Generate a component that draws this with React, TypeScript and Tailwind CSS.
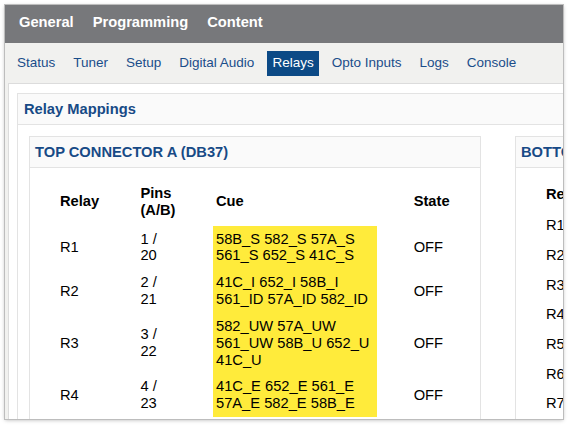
import React from 'react';

const tabs = ['Status', 'Tuner', 'Setup', 'Digital Audio', 'Relays', 'Opto Inputs', 'Logs', 'Console'];

const topRelays = [
  { id: 'R1', pins: ['1 /', '20'], cue: ['58B_S 582_S 57A_S', '561_S 652_S 41C_S'], state: 'OFF' },
  { id: 'R2', pins: ['2 /', '21'], cue: ['41C_I 652_I 58B_I', '561_ID 57A_ID 582_ID'], state: 'OFF' },
  { id: 'R3', pins: ['3 /', '22'], cue: ['582_UW 57A_UW', '561_UW 58B_U 652_U', '41C_U'], state: 'OFF' },
  { id: 'R4', pins: ['4 /', '23'], cue: ['41C_E 652_E 561_E', '57A_E 582_E 58B_E'], state: 'OFF' },
];

const bottomRelays = ['R1', 'R2', 'R3', 'R4', 'R5', 'R6', 'R7'];

const Lines: React.FC<{ lines: string[] }> = ({ lines }) => (
  <>
    {lines.map((l, i) => (
      <span key={i} className="block whitespace-nowrap">{l}</span>
    ))}
  </>
);

export default function App() {
  return (
    <div className="w-[568px] h-[425px] bg-white pt-[5px] pl-[5px] font-['Liberation_Sans',Arial,sans-serif] text-black">
      <div className="w-[558px] h-[414px] overflow-hidden bg-[#f1f1ef] flex flex-col shadow-[0_0_0_1px_#bdbdbd,0_1px_4px_rgba(0,0,0,0.3)]">
        {/* main menu */}
        <div className="h-[38px] shrink-0 bg-[#77787b] flex items-center gap-[19px] pl-[14px] pb-[3px] text-[14.7px] font-bold text-white">
          <span>General</span>
          <span>Programming</span>
          <span>Content</span>
        </div>

        {/* sub menu */}
        <div className="h-[40px] shrink-0 flex items-start gap-[8px] pt-[8px] pl-[7px] text-[13.5px] text-[#1a4d8a] whitespace-nowrap">
          {tabs.map((t) => (
            <span
              key={t}
              className={
                t === 'Relays'
                  ? 'h-[25px] px-[5px] flex items-center bg-[#0c4a86] text-white'
                  : 'h-[25px] px-[5px] flex items-center'
              }
            >
              {t}
            </span>
          ))}
        </div>

        {/* content */}
        <div className="flex-1 ml-[3px] border-l border-t border-[#dcdcdc] bg-white pl-[8px] pt-[8.5px]">
          <div className="w-[720px] border border-[#e3e3e3]">
            <div className="h-[31.5px] border-b border-[#e3e3e3] bg-[#fafafa] flex items-center pl-[6px] text-[14.7px] font-bold text-[#174a86]">
              Relay Mappings
            </div>

            <div className="flex gap-[34px] pl-[11px] pt-[10.7px]">
              {/* top connector */}
              <div className="w-[452px] shrink-0 border border-[#e3e3e3]">
                <div className="h-[31.5px] border-b border-[#e3e3e3] bg-[#fafafa] flex items-center pl-[5px] text-[14.7px] font-bold text-[#174a86]">
                  TOP CONNECTOR A (DB37)
                </div>
                <div className="grid grid-cols-[80.4px_72.6px_164.4px_1fr] pl-[30px] mt-[7.7px] text-[14.7px] leading-[16.9px]">
                  <div className="pt-[9px] pb-[7px] flex items-center font-bold">Relay</div>
                  <div className="pt-[9px] pb-[7px] flex items-center font-bold"><span>Pins<br />(A/B)</span></div>
                  <div className="pt-[9px] pb-[7px] pl-[3px] flex items-center font-bold">Cue</div>
                  <div className="pt-[9px] pb-[7px] pl-[36.3px] flex items-center font-bold">State</div>

                  {topRelays.map((r) => (
                    <React.Fragment key={r.id}>
                      <div className="py-[4.9px] flex items-center">{r.id}</div>
                      <div className="py-[4.9px] flex items-center"><span><Lines lines={r.pins} /></span></div>
                      <div className="py-[4.9px] pl-[3px] bg-[#ffeb3b] flex items-center"><span><Lines lines={r.cue} /></span></div>
                      <div className="py-[4.9px] pl-[36.3px] flex items-center">{r.state}</div>
                    </React.Fragment>
                  ))}
                </div>
              </div>

              {/* bottom connector */}
              <div className="w-[452px] shrink-0 border border-[#e3e3e3]">
                <div className="h-[31.5px] border-b border-[#e3e3e3] bg-[#fafafa] flex items-center pl-[5px] text-[14.7px] font-bold text-[#174a86] whitespace-nowrap">
                  BOTTOM CONNECTOR B (DB37)
                </div>
                <div className="grid grid-cols-[100px_100px_1fr] pl-[30px] mt-[9.7px] text-[14.7px] leading-[16.9px]">
                  <div className="py-[8px] font-bold">Relay</div>
                  <div className="py-[8px] font-bold">Pins (A/B)</div>
                  <div className="py-[8px] font-bold">Cue</div>
                  {bottomRelays.map((id, i) => (
                    <React.Fragment key={id}>
                      <div className="py-[6.4px]">{id}</div>
                      <div className="py-[6.4px]">{i + 8} / {i + 27}</div>
                      <div className="py-[6.4px]">OFF</div>
                    </React.Fragment>
                  ))}
                </div>
              </div>
            </div>
          </div>
        </div>
      </div>
    </div>
  );
}
